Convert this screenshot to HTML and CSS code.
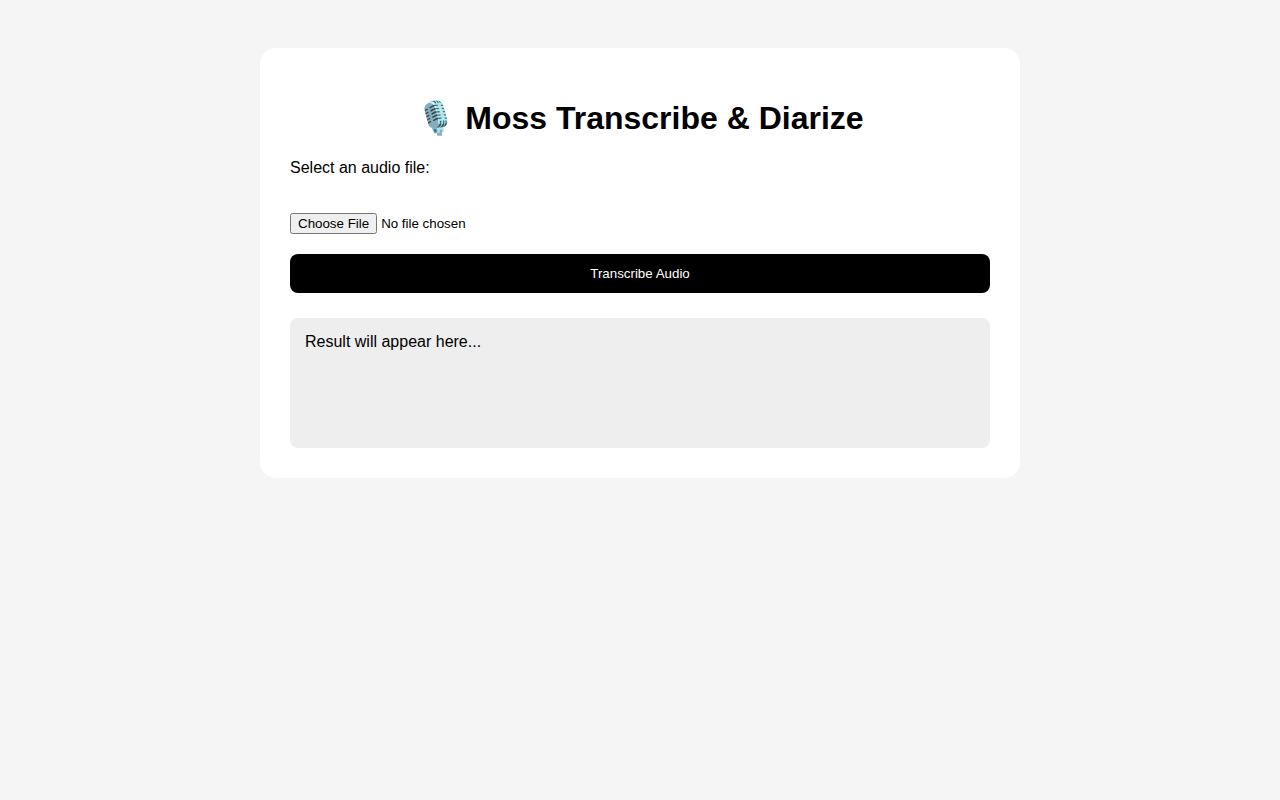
FILE: index.html
```html
<!DOCTYPE html>
<html>
<head>
    <title>Moss Transcribe &amp; Diarize</title>
    <link rel="stylesheet" href="styles.css">
</head>
<body>
    <div class="container">
        <h1>🎙️ Moss Transcribe &amp; Diarize</h1>
        <form class="upload-form" onsubmit="return false">
            <label for="audioFile">Select an audio file:</label>
            <input type="file" id="audioFile" accept="audio/*">
            <button type="submit">Transcribe Audio</button>
        </form>
        <div class="result">Result will appear here...</div>
    </div>
</body>
</html>
```

FILE: styles.css
```css
body {
    margin: 0;
    padding: 48px 0;
    background-color: #f5f5f5;
    font-family: "Liberation Sans", Arial, sans-serif;
}
.container {
    width: 700px;
    margin: 0 auto;
    padding: 30px;
    background-color: #fff;
    border-radius: 16px;
}
h1 {
    margin: 21.44px 0;
    font-size: 32px;
    text-align: center;
}
label {
    display: block;
    margin-bottom: 36px;
    font-size: 16px;
}
input[type="file"] {
    display: block;
    margin-bottom: 20px;
}
button {
    display: block;
    width: 100%;
    padding: 12px;
    border: none;
    border-radius: 8px;
    background-color: #000;
    color: #fff;
}
.result {
    min-height: 100px;
    margin-top: 25px;
    padding: 15px;
    border-radius: 8px;
    background-color: #eee;
    font-size: 16px;
}
```
